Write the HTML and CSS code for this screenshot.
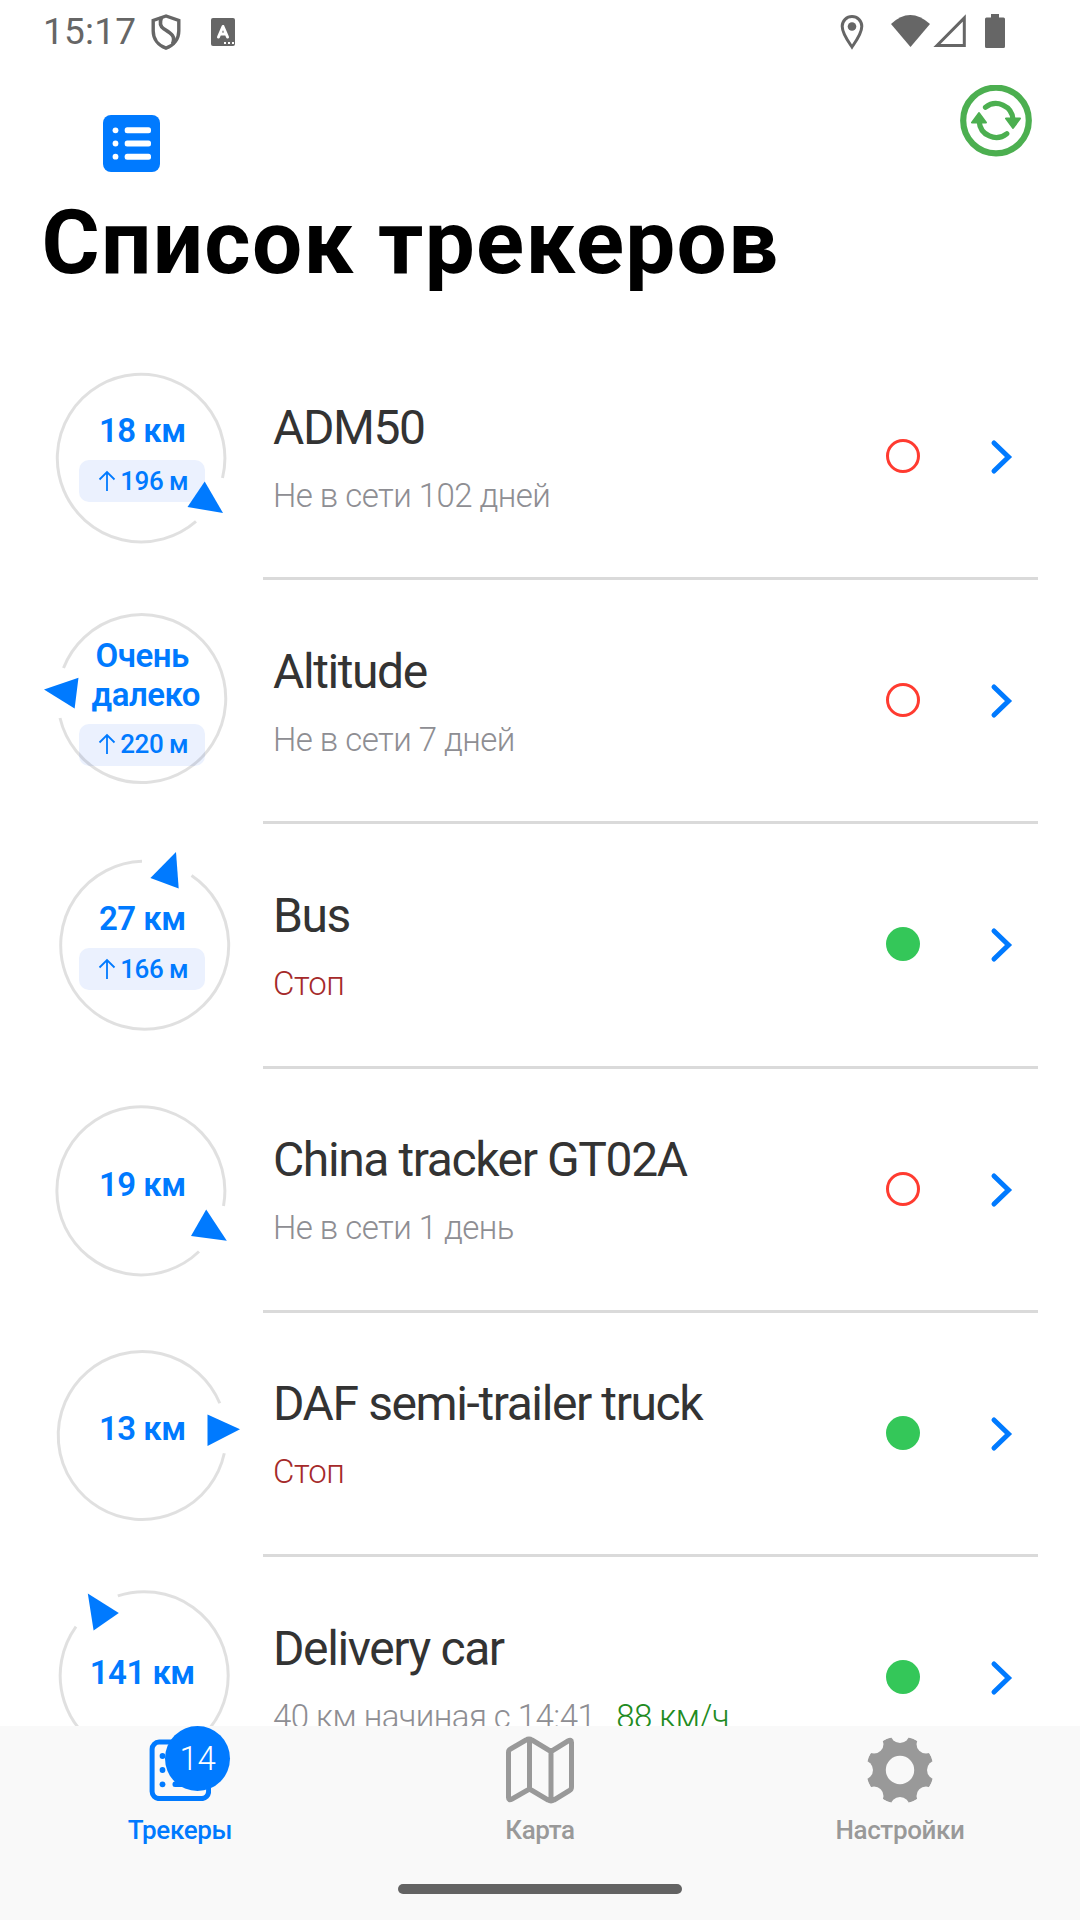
FILE: index.html
```html
<!DOCTYPE html>
<html lang="ru">
<head>
	<meta charset="UTF-8">
	<title>Список трекеров</title>
	<link rel="stylesheet" href="styles.css">
</head>
<body>
	<svg class="defs">
		<symbol id="chevron" viewBox="0 0 24 36">
			<path d="M4 4l14.500 14L4 32" fill="none" stroke="#007aff" stroke-width="5" stroke-linecap="round"/>
		</symbol>
		<symbol id="up" viewBox="0 0 18 22">
			<path d="M9 21V2M1.500 9.500L9 2l7.500 7.500" fill="none" stroke="#007aff" stroke-width="1.800"/>
		</symbol>
	</svg>
	<div class="screen">
		<div class="status">
			<span class="time">15:17</span>
			<svg class="shield" width="30" height="36" viewBox="0 0 30 36">
				<path d="M15 2L2.200 6.500v10.500c0 8 5 14.500 12.800 17.200 7.800-2.700 12.800-9.200 12.800-17.200V6.500z" fill="none" stroke="#666" stroke-width="3.400"/>
				<path d="M10.500 3.500c-2 5-1.500 9 2.500 11.500 7 4.500 12 7 8.500 15" fill="none" stroke="#666" stroke-width="3.600"/>
			</svg>
			<svg class="lang" width="24" height="28" viewBox="0 0 24 28">
				<rect width="24" height="28" rx="2" fill="#666"/>
				<path d="M7.500 19L12 8.500 16.500 19M9 16h6" fill="none" stroke="#fff" stroke-width="3" stroke-linecap="round" stroke-linejoin="round"/>
				<path d="M13 24h2v2h-2zM17 24h2v2h-2zM21 24h2v2h-2z" fill="#fff"/>
			</svg>
			<svg class="sys" width="166" height="36" viewBox="0 0 166 36">
				<path d="M12 33C7.500 26.500 2.200 19.500 2.200 12.300a9.800 9.800 0 0 1 19.600 0C21.800 19.500 16.500 26.500 12 33z" fill="none" stroke="#666" stroke-width="3"/>
				<circle cx="12" cy="12.500" r="4.300" fill="#666"/>
				<path d="M51 10Q70-8 90 10L70.500 33z" fill="#666"/>
				<path d="M97 31.500L124.300 4v27.500z" fill="none" stroke="#666" stroke-width="3"/>
				<path d="M151 0h8v3.500h4.500q1.500 0 1.500 1.500v27.500q0 1.500-1.500 1.500h-17q-1.500 0-1.500-1.500V5q0-1.500 1.500-1.500h4.500z" fill="#666"/>
			</svg>
		</div>
		<div class="header">
			<svg class="menu" width="57" height="57" viewBox="0 0 57 57">
				<rect width="57" height="57" rx="8" fill="#007aff"/>
				<g fill="#fff">
					<circle cx="12.500" cy="15.300" r="2.900"/>
					<circle cx="12.500" cy="28.500" r="2.900"/>
					<circle cx="12.500" cy="41.700" r="2.900"/>
					<rect x="21.700" y="12.300" width="26.300" height="6" rx="2.500"/>
					<rect x="21.700" y="25.500" width="26.300" height="6" rx="2.500"/>
					<rect x="21.700" y="38.700" width="26.300" height="6" rx="2.500"/>
				</g>
			</svg>
			<svg class="refresh" width="72" height="72" viewBox="0 0 72 72">
				<g fill="none" stroke="#4caf50" stroke-width="5.200" stroke-linecap="round">
					<circle cx="36" cy="35.500" r="32.800" stroke-width="6.200"/>
					<path d="M25.500 22.300A17 17 0 0 1 53 34.500"/>
					<path d="M46.800 48.700A17 17 0 0 1 19.200 36.500"/>
				</g>
				<path d="M46 33.500h14l-7 9.500zM12 37.500h14l-7-9.500z" fill="#4caf50" stroke="#4caf50" stroke-width="2" stroke-linejoin="round"/>
			</svg>
		</div>
		<h1>Список трекеров</h1>
		<div class="list">
			<div class="row">
				<div class="dial">
					<div class="dist">18 км</div>
					<div class="alt"><svg width="18" height="22"><use href="#up"/></svg>196 м</div>
					<svg class="ring" viewBox="0 0 262 244">
						<path d="M196 185.400A83.800 83.800 0 1 1 222.500 142"/>
						<polygon points="204.700,145.400 187.500,171 223,177"/>
					</svg>
				</div>
				<div class="body">
					<div class="info">
						<div class="name">ADM50</div>
						<div class="state">Не в сети 102 дней</div>
					</div>
					<i class="dot off"></i>
					<svg class="chevron"><use href="#chevron"/></svg>
				</div>
			</div>
			<div class="row">
				<div class="dial">
					<div class="dist">Очень<br><span class="far">далеко</span></div>
					<div class="alt"><svg width="18" height="22"><use href="#up"/></svg>220 м</div>
					<svg class="ring" viewBox="0 0 262 244">
						<path d="M63.500 88A84 84 0 1 1 60 138"/>
						<polygon points="44,109.500 78.500,97.800 74.600,128.500"/>
					</svg>
				</div>
				<div class="body">
					<div class="info">
						<div class="name">Altitude</div>
						<div class="state">Не в сети 7 дней</div>
					</div>
					<i class="dot off"></i>
					<svg class="chevron"><use href="#chevron"/></svg>
				</div>
			</div>
			<div class="row">
				<div class="dial">
					<div class="dist">27 км</div>
					<div class="alt"><svg width="18" height="22"><use href="#up"/></svg>166 м</div>
					<svg class="ring" viewBox="0 0 262 244">
						<path d="M191.500 51.500A84 84 0 1 1 142 37.300"/>
						<polygon points="176,28 150.400,54 178.700,64.600"/>
					</svg>
				</div>
				<div class="body">
					<div class="info">
						<div class="name">Bus</div>
						<div class="state stop">Стоп</div>
					</div>
					<i class="dot on"></i>
					<svg class="chevron"><use href="#chevron"/></svg>
				</div>
			</div>
			<div class="row">
				<div class="dial">
					<div class="dist">19 км</div>
					<svg class="ring" viewBox="0 0 262 244">
						<path d="M199 182.500A84 84 0 1 1 223.500 137"/>
						<polygon points="206.200,140.400 191,167.100 226.800,171.800"/>
					</svg>
				</div>
				<div class="body">
					<div class="info">
						<div class="name">China tracker GT02A</div>
						<div class="state">Не в сети 1 день</div>
					</div>
					<i class="dot off"></i>
					<svg class="chevron"><use href="#chevron"/></svg>
				</div>
			</div>
			<div class="row">
				<div class="dial">
					<div class="dist">13 км</div>
					<svg class="ring" viewBox="0 0 262 244">
						<path d="M224.300 140.300A84 84 0 1 1 219.800 90.300"/>
						<polygon points="207.500,101.600 207.500,132.900 240,116.200"/>
					</svg>
				</div>
				<div class="body">
					<div class="info">
						<div class="name">DAF semi-trailer truck</div>
						<div class="state stop">Стоп</div>
					</div>
					<i class="dot on"></i>
					<svg class="chevron"><use href="#chevron"/></svg>
				</div>
			</div>
			<div class="row">
				<div class="dial">
					<div class="dist">141 км</div>
					<svg class="ring" viewBox="0 0 262 244">
						<path d="M117.800 38.900A84 84 0 1 1 76 69.600"/>
						<polygon points="87.800,36.500 118.800,56 93.600,73.400"/>
					</svg>
				</div>
				<div class="body">
					<div class="info">
						<div class="name">Delivery car</div>
						<div class="state">40 км начиная с 14:41<span class="speed">88 км/ч</span></div>
					</div>
					<i class="dot on"></i>
					<svg class="chevron"><use href="#chevron"/></svg>
				</div>
			</div>
		</div>
		<div class="tabbar">
			<div class="tab active">
				<div class="icon">
					<svg width="62" height="62" viewBox="0 0 62 62">
						<rect x="3.100" y="3.100" width="56.500" height="56.500" rx="7" fill="none" stroke="#007aff" stroke-width="5"/>
						<g fill="#007aff">
							<circle cx="13.500" cy="17" r="2.900"/>
							<circle cx="13.500" cy="31" r="2.900"/>
							<circle cx="13.500" cy="45.300" r="2.900"/>
							<rect x="23.500" y="14.300" width="27" height="5.500" rx="2.500"/>
							<rect x="23.500" y="28.300" width="27" height="5.500" rx="2.500"/>
							<rect x="23.500" y="42.500" width="27" height="5.500" rx="2.500"/>
						</g>
					</svg>
					<span class="badge">14</span>
				</div>
				<span>Трекеры</span>
			</div>
			<div class="tab">
				<div class="icon">
					<svg width="70" height="68" viewBox="0 0 70 68">
						<path d="M3.500 16.500Q3.500 14 5.500 13L21 4Q24 2 27 4L46 15.500 63 5Q66.500 3 66.500 6.500V51Q66.500 53.500 64.500 54.500L49 64Q46 66 43 64L24.500 53 7 63Q3.500 65 3.500 61.500zM24.500 4V53M46 15.500V64" fill="none" stroke="#999" stroke-width="5" stroke-linejoin="round"/>
					</svg>
				</div>
				<span>Карта</span>
			</div>
			<div class="tab">
				<div class="icon">
					<svg width="68" height="68" viewBox="-34 -34 68 68">
						<mask id="teeth">
							<circle r="34" fill="#fff"/>
							<circle r="14.200"/>
							<circle cy="-36.500" r="9.500"/>
							<circle cy="36.500" r="9.500"/>
							<circle cx="-36.500" r="9.500"/>
							<circle cx="36.500" r="9.500"/>
							<circle cx="-26" cy="-26" r="9.500"/>
							<circle cx="26" cy="-26" r="9.500"/>
							<circle cx="-26" cy="26" r="9.500"/>
							<circle cx="26" cy="26" r="9.500"/>
						</mask>
						<circle r="33.800" fill="#999" mask="url(#teeth)"/>
					</svg>
				</div>
				<span>Настройки</span>
			</div>
			<div class="home"></div>
		</div>
	</div>
</body>
</html>
```
FILE: styles.css
```css
*{
	margin: 0;
	padding: 0;
	box-sizing: border-box;
}
body{
	background: #fff;
	font-family: Roboto, sans-serif;
}
svg{
	display: block;
	flex: none;
}
.defs{
	width: 0;
	height: 0;
	position: absolute;
}
.screen{
	width: 1080px;
	height: 1920px;
	display: flex;
	flex-direction: column;
	overflow: hidden;
}
/* status bar */
.status{
	height: 62px;
	padding: 14px 74px 0 43px;
	display: flex;
}
.time{
	width: 107.500px;
	font-size: 37px;
	line-height: 35px;
	letter-spacing: .2px;
	color: #666;
}
.shield{
	margin-right: 30.500px;
}
.lang{
	margin-top: 4px;
}
.sys{
	margin-left: auto;
}
/* header */
.header{
	height: 125px;
	padding: 23px 48px 0 103px;
	display: flex;
	justify-content: space-between;
}
.menu{
	margin-top: 30px;
}
h1{
	height: 149px;
	padding-left: 41.500px;
	font-size: 89px;
	line-height: 112px;
	font-weight: 700;
	letter-spacing: 1.250px;
	white-space: nowrap;
}
/* trackers */
.list{
	flex: 1;
	min-height: 0;
	overflow: hidden;
}
.row{
	height: 244.200px;
	display: flex;
}
.dial{
	width: 262.500px;
	padding: 0 57px 3px 79px;
	position: relative;
	display: flex;
	flex-direction: column;
	align-items: center;
	justify-content: center;
	color: #007aff;
}
.dist{
	margin-bottom: 10px;
	font-size: 33px;
	line-height: 39px;
	font-weight: 600;
	letter-spacing: -.5px;
	text-align: center;
	white-space: nowrap;
}
.far{
	margin-left: 7px;
}
.alt{
	width: 126px;
	height: 42px;
	padding: 0 0 1px 2px;
	display: flex;
	align-items: center;
	justify-content: center;
	gap: 4px;
	border-radius: 10px;
	background: #ebf1fe;
	font-size: 26px;
	font-weight: 500;
	letter-spacing: -.5px;
}
.ring{
	position: absolute;
	left: 0;
	top: 0;
	width: 262px;
	height: 244px;
	filter: blur(.6px);
}
.ring path{
	fill: none;
	stroke: rgba(0,0,0,.12);
	stroke-width: 3;
}
.ring polygon{
	fill: #007aff;
}
.body{
	flex: 1;
	margin-right: 42px;
	padding: 0 24px 0 10.500px;
	display: flex;
	align-items: center;
	border-bottom: 3px solid #dadada;
}
.info{
	flex: 1;
	padding-top: 5px;
	white-space: nowrap;
}
.name{
	font-size: 48px;
	line-height: 66px;
	color: #333;
	letter-spacing: -1.400px;
}
.state{
	margin-top: 7px;
	font-size: 33px;
	line-height: 56px;
	font-weight: 300;
	color: #8e8e93;
	letter-spacing: -.550px;
}
.stop{
	color: #a52a2a;
}
.speed{
	margin-left: 21px;
	color: #228b22;
}
.dot{
	width: 34px;
	height: 34px;
	margin: 0 70.500px 1px 0;
	border-radius: 50%;
}
.off{
	border: 3px solid #ff3b30;
}
.on{
	background: #34c759;
}
.chevron{
	width: 24px;
	height: 36px;
	margin-top: 1px;
}
/* tab bar */
.tabbar{
	height: 194px;
	position: relative;
	display: flex;
	background: #f9f9f9;
}
.tab{
	flex: 1;
	display: flex;
	flex-direction: column;
	align-items: center;
	font-size: 26px;
	line-height: 32px;
	font-weight: 500;
	letter-spacing: -.350px;
	color: #999;
}
.icon{
	height: 88px;
	padding-bottom: 1px;
	position: relative;
	display: flex;
	align-items: center;
}
.active{
	color: #007aff;
}
.badge{
	width: 65px;
	height: 65px;
	position: absolute;
	left: 16px;
	top: 0;
	border-radius: 50%;
	background: #007aff;
	color: #fff;
	font-size: 33px;
	line-height: 65px;
	font-weight: 300;
	text-align: center;
}
.home{
	width: 284px;
	height: 10px;
	position: absolute;
	left: 398px;
	bottom: 26px;
	border-radius: 5px;
	background: #636363;
}
```
